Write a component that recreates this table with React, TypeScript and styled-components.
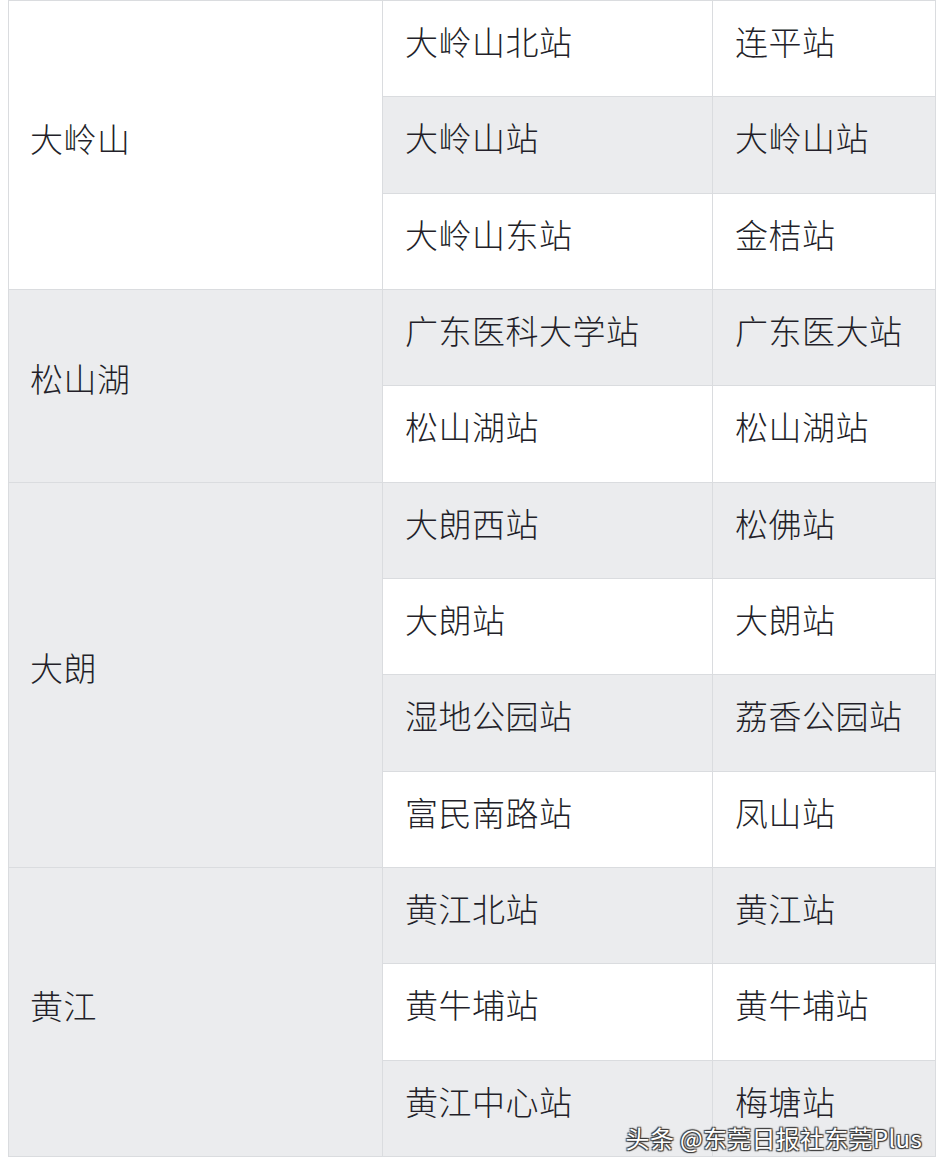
import { ReactElement } from 'react'
import styled, { createGlobalStyle } from 'styled-components'

const GlobalStyle = createGlobalStyle`
  html, body {
    margin: 0;
    padding: 0;
    background: #ffffff;
  }
  body {
    font-family: 'Noto Sans CJK SC', 'Noto Sans', sans-serif;
  }
`

const COLOR = {
  line: '#dadcdf',
  white: '#ffffff',
  gray: '#ebecee',
  text: '#231f29',
}

type Group = {
  area: string
  rows: Array<[string, string]>
}

const GROUPS: Group[] = [
  {
    area: '大岭山',
    rows: [
      ['大岭山北站', '连平站'],
      ['大岭山站', '大岭山站'],
      ['大岭山东站', '金桔站'],
    ],
  },
  {
    area: '松山湖',
    rows: [
      ['广东医科大学站', '广东医大站'],
      ['松山湖站', '松山湖站'],
    ],
  },
  {
    area: '大朗',
    rows: [
      ['大朗西站', '松佛站'],
      ['大朗站', '大朗站'],
      ['湿地公园站', '荔香公园站'],
      ['富民南路站', '凤山站'],
    ],
  },
  {
    area: '黄江',
    rows: [
      ['黄江北站', '黄江站'],
      ['黄牛埔站', '黄牛埔站'],
      ['黄江中心站', '梅塘站'],
    ],
  },
]

const StyledPage = styled.div`
  position: relative;
  width: 944px;
  height: 1172px;
  padding-left: 8px;
  box-sizing: border-box;
`

const StyledTable = styled.div`
  display: grid;
  grid-template-columns: 373px 329px 222px;
  grid-template-rows: repeat(12, 1fr);
  gap: 1px;
  padding: 1px;
  width: 928px;
  height: 1157px;
  box-sizing: border-box;
  background: ${COLOR.line};
`

const StyledCell = styled.div<{ $striped: boolean; $row: number; $col: number; $span?: number }>`
  display: flex;
  align-items: center;
  padding: 0 0 14px 22px;
  background: ${({ $striped }): string => ($striped ? COLOR.gray : COLOR.white)};
  color: ${COLOR.text};
  font-size: 33px;
  font-weight: 300;
  line-height: 1;
  letter-spacing: 0.5px;
  white-space: nowrap;
  grid-column: ${({ $col }): number => $col};
  grid-row: ${({ $row, $span }): string => `${$row} / span ${$span ?? 1}`};
`

const StyledAreaCell = styled(StyledCell)`
  padding-left: 21px;
`

const StyledWatermark = styled.div`
  position: absolute;
  right: 22px;
  bottom: 22px;
  font-size: 24px;
  line-height: 1;
  color: #ffffff;
  letter-spacing: 0.3px;
  text-shadow:
    1px 1px 1px #3a3a3a,
    -1px -1px 1px #3a3a3a,
    1px -1px 1px #3a3a3a,
    -1px 1px 1px #3a3a3a;
`

const App = (): ReactElement => {
  let rowIndex = 0
  return (
    <StyledPage>
      <GlobalStyle />
      <StyledTable>
        {GROUPS.map((group) => {
          const start = rowIndex
          rowIndex += group.rows.length
          return [
            <StyledAreaCell
              key={group.area}
              $striped={start % 2 === 1}
              $row={start + 1}
              $col={1}
              $span={group.rows.length}
            >
              {group.area}
            </StyledAreaCell>,
            ...group.rows.map(([station, line], i) => {
              const row = start + i
              const striped = row % 2 === 1
              return [
                <StyledCell key={`${group.area}-s-${i}`} $striped={striped} $row={row + 1} $col={2}>
                  {station}
                </StyledCell>,
                <StyledCell key={`${group.area}-l-${i}`} $striped={striped} $row={row + 1} $col={3}>
                  {line}
                </StyledCell>,
              ]
            }),
          ]
        })}
      </StyledTable>
      <StyledWatermark>头条 @东莞日报社东莞Plus</StyledWatermark>
    </StyledPage>
  )
}

export default App
